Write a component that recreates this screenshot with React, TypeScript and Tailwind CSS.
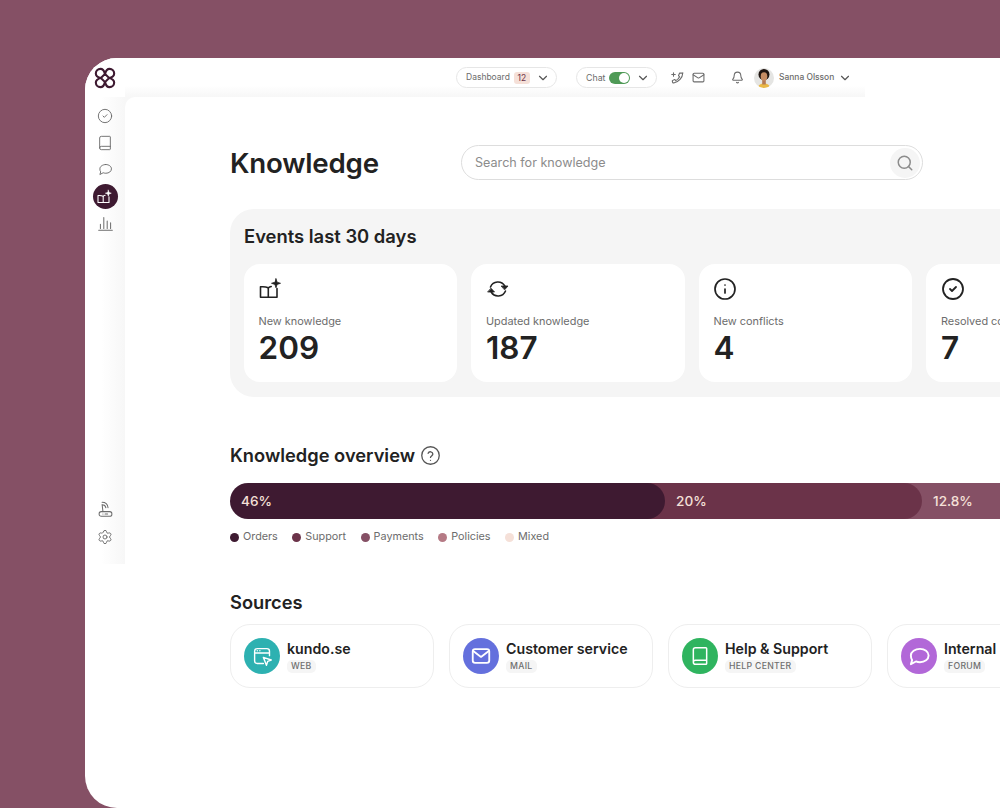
import { Bell, Book, ChevronDown, CircleCheck, Info, Mail, Search, Settings } from 'lucide-react'
import type { ReactNode } from 'react'

const events = [
  { label: 'New knowledge', value: '209', icon: <BookSpark className="w-[24px] h-[24px]" /> },
  { label: 'Updated knowledge', value: '187', icon: <SyncIcon /> },
  { label: 'New conflicts', value: '4', icon: <Info className="w-[24px] h-[24px]" strokeWidth={1.7} /> },
  { label: 'Resolved conflicts', value: '7', icon: <CircleCheck className="w-[24px] h-[24px]" strokeWidth={1.8} /> },
]

const legend = [
  { label: 'Orders', color: 'bg-[#3e1a31]' },
  { label: 'Support', color: 'bg-[#6b3349]' },
  { label: 'Payments', color: 'bg-[#855065]' },
  { label: 'Policies', color: 'bg-[#b57a85]' },
  { label: 'Mixed', color: 'bg-[#f5e0d8]' },
]

function Logo() {
  return (
    <svg viewBox="0 0 24 24" className="w-[22px] h-[22px]" fill="none" stroke="#3e1a31" strokeWidth="2.300" strokeLinejoin="round">
      <path d="M12 7.500C11 3.500 9.500 2 7 2 4.200 2 2 4.200 2 7c0 2.500 1.500 4 5.500 5" />
      <path d="M12 7.500C13 3.500 14.500 2 17 2c2.800 0 5 2.200 5 5 0 2.500-1.500 4-5.500 5" />
      <path d="M12 16.500C11 20.500 9.500 22 7 22c-2.800 0-5-2.200-5-5 0-2.500 1.500-4 5.500-5" />
      <path d="M12 16.500c1 4 2.500 5.500 5 5.500 2.800 0 5-2.200 5-5 0-2.500-1.500-4-5.500-5" />
      <path d="M12 7.500L16.500 12 12 16.500 7.500 12Z" />
    </svg>
  )
}

function BookSpark({ className }: { className: string }) {
  return (
    <svg viewBox="0 0 24 24" className={className} fill="none" stroke="currentColor" strokeWidth="1.600" strokeLinejoin="round" strokeLinecap="round">
      <path d="M9.300 20.200V10.800C7.300 9.900 4.300 9.500 1.500 9.800V20.200H18V11.500" />
      <path d="M9.300 10.800c.9-.6 1.800-1 2.900-1.300" />
      <path d="M17 1.800l1.100 3.400 3.400 1.100-3.400 1.100-1.100 3.400-1.100-3.400-3.400-1.100 3.400-1.100Z" fill="currentColor" strokeWidth="0.800" />
    </svg>
  )
}

function SyncIcon() {
  return (
    <svg viewBox="0 0 24 24" className="w-[24px] h-[24px]" fill="none" stroke="currentColor" strokeWidth="1.600" strokeLinecap="round" strokeLinejoin="round">
      <path d="M4.500 10A8 8 0 0 1 18.800 9" />
      <path d="M19.500 14A8 8 0 0 1 5.200 15" />
      <path d="M15.500 9h6.500l-3.200 3.600Z" fill="currentColor" strokeWidth="0.800" />
      <path d="M2 15h6.500l-3.300-3.600Z" fill="currentColor" strokeWidth="0.800" />
    </svg>
  )
}

function BarsIcon() {
  return (
    <svg viewBox="0 0 20 20" className="w-[17px] h-[17px]" fill="none" stroke="currentColor" strokeWidth="1.200" strokeLinecap="round">
      <path d="M2 18h16M4 16v-5M8 16V3M12 16V7M16 16v-7" />
    </svg>
  )
}

function RouterIcon() {
  return (
    <svg viewBox="0 0 20 20" className="w-[17px] h-[17px]" fill="none" stroke="currentColor" strokeWidth="1.200" strokeLinecap="round" strokeLinejoin="round">
      <rect x="2.500" y="12.500" width="15" height="5.500" rx="2.500" />
      <path d="M7 12.500L6 4M6 1.500c3.500 0 6.500 2.500 7 6.500M6.500 4.500c2 0 3.500 1.500 4 3.500" />
      <path d="M7 15.300h.01M9.500 15.300h3" />
    </svg>
  )
}

function Bubble({ className, strokeWidth }: { className: string; strokeWidth: number }) {
  return (
    <svg viewBox="0 0 24 24" className={className} fill="none" stroke="currentColor" strokeWidth={strokeWidth} strokeLinecap="round" strokeLinejoin="round">
      <path d="M12.500 4c5 0 9 3 9 7s-4 7-9 7c-1.500 0-3-.3-4.200-.8L3 20l1.300-4.200C3.400 14.500 3 13 3 11c0-4 4.500-7 9.500-7Z" />
    </svg>
  )
}

function PhonePlus() {
  return (
    <svg viewBox="0 0 24 24" className="w-[14px] h-[14px]" fill="none" stroke="currentColor" strokeWidth="1.900" strokeLinecap="round" strokeLinejoin="round">
      <path d="M21 4c-.5 9-7 16-15.500 17.500-1.500 0-2.500-2.500-2.500-4l4-2 2 2c3-1.500 5-3.500 6.500-6.500l-2-2 2-4.500c1.500 0 3 .5 5.500 0Z" transform="translate(1 -1)" />
      <path d="M6 3v6M3 6h6" />
    </svg>
  )
}

function Avatar() {
  return (
    <svg viewBox="0 0 20 20" className="w-[20px] h-[20px] rounded-full">
      <rect width="20" height="20" fill="#e5e5e3" />
      <path d="M4 20c.5-3.500 3-4.500 6-4.500s5.500 1 6 4.500Z" fill="#eab845" />
      <rect x="8.200" y="11" width="3.600" height="5.500" fill="#b47a55" />
      <circle cx="10" cy="6.500" r="5.500" fill="#1f1511" />
      <ellipse cx="10" cy="8.500" rx="3.300" ry="4.200" fill="#c58c63" />
    </svg>
  )
}

function SourceCard({ name, kind, color, icon }: { name: string; kind: string; color: string; icon: ReactNode }) {
  return (
    <div className="w-[204px] h-[64px] shrink-0 rounded-[20px] border border-[#eeeeee] flex items-center pl-[13px] gap-[7px]">
      <div className={`w-[36px] h-[36px] rounded-full flex items-center justify-center text-white shrink-0 ${color}`}>{icon}</div>
      <div className="whitespace-nowrap">
        <div className="text-[14.200px] leading-[18px] font-semibold text-[#222222]">{name}</div>
        <span className="block w-fit mt-[2px] px-[4px] bg-[#f5f5f5] rounded-[5px] text-[8.700px] leading-[13px] tracking-[0.3px] font-medium text-[#6f6f6f]">{kind}</span>
      </div>
    </div>
  )
}

function NavIcon({ children, active }: { children: ReactNode; active?: boolean }) {
  return (
    <div className={`w-[25px] h-[25px] rounded-full flex items-center justify-center ${active ? 'bg-[#3e1a31] text-white' : 'text-[#6c6c6c]'}`}>
      {children}
    </div>
  )
}

export default function App() {
  return (
    <div className="h-[808px] w-[1000px] overflow-hidden bg-[#855065] pl-[85px] pt-[58px]" style={{ fontFamily: 'Inter, sans-serif' }}>
      <div className="h-[750px] w-[915px] bg-white rounded-l-[32px] overflow-hidden">
        {/* top bar */}
        <div className="flex w-[780px] h-[39px]">
          <div className="w-[40px] flex items-center justify-center bg-white">
            <Logo />
          </div>
          <div className="flex-1 flex items-center pl-[331px] text-[#6c6c6c] bg-gradient-to-b from-white from-70% to-[#f7f7f7]">
            <div className="w-[101px] h-[21px] rounded-full border border-[#e6e6e6] bg-white flex items-center pl-[9px] text-[8.500px]">
              Dashboard
              <span className="ml-[4px] w-[16px] h-[12px] rounded-[3px] bg-[#f5e0d8] text-[#6b3349] text-[8.500px] leading-[12px] text-center">12</span>
              <ChevronDown className="ml-[6px] w-[14px] h-[14px] text-[#555555]" />
            </div>
            <div className="ml-[19px] w-[81px] h-[21px] rounded-full border border-[#e6e6e6] bg-white flex items-center pl-[9px] text-[8.800px]">
              Chat
              <span className="ml-[4px] w-[21px] h-[12px] rounded-full bg-[#4f9a56] flex items-center justify-end pr-[1px]">
                <span className="w-[10px] h-[10px] rounded-full bg-white" />
              </span>
              <ChevronDown className="ml-[6px] w-[14px] h-[14px] text-[#555555]" />
            </div>
            <div className="ml-[12.500px]"><PhonePlus /></div>
            <Mail className="ml-[8px] w-[13px] h-[13px]" />
            <Bell className="ml-[26px] w-[13px] h-[13px]" />
            <div className="ml-[10.500px]"><Avatar /></div>
            <span className="ml-[5px] text-[8.450px] font-medium">Sanna Olsson</span>
            <ChevronDown className="ml-[4px] w-[14px] h-[14px] text-[#555555]" />
          </div>
        </div>

        <div className="flex bg-[linear-gradient(#f7f7f7,#f7f7f7)] bg-no-repeat bg-[length:20px_20px] bg-[position:40px_0]">
          {/* side rail */}
          <div className="w-[40px] h-[467px] shrink-0 flex flex-col items-center justify-between pb-[15px] pt-[6px] bg-gradient-to-r from-white from-40% to-[#f7f7f7]">
            <div className="flex flex-col items-center gap-[2px]">
              <NavIcon><CircleCheck className="w-[16px] h-[16px]" strokeWidth={1.400} /></NavIcon>
              <NavIcon><Book className="w-[16px] h-[16px]" strokeWidth={1.400} /></NavIcon>
              <NavIcon><Bubble className="w-[15px] h-[15px]" strokeWidth={1.500} /></NavIcon>
              <NavIcon active><BookSpark className="w-[16px] h-[16px]" /></NavIcon>
              <NavIcon><BarsIcon /></NavIcon>
            </div>
            <div className="flex flex-col items-center gap-[2px]">
              <NavIcon><RouterIcon /></NavIcon>
              <NavIcon><Settings className="w-[16px] h-[16px]" strokeWidth={1.400} /></NavIcon>
            </div>
          </div>

          {/* main */}
          <div className="flex-1 min-w-0 rounded-tl-[10px] bg-white pl-[105px] pt-[48px] text-[#222222]">
            <div className="flex items-center w-[693px]">
              <h1 className="w-[231px] h-[35px] text-[27.700px] leading-[37px] font-semibold tracking-[-0.2px]">Knowledge</h1>
              <div className="w-[462px] h-[35px] rounded-full border border-[#dddddd] flex items-center pl-[13px] pr-[2px] justify-between">
                <span className="mt-[1px] text-[12.600px] text-[#8c8c8c]">Search for knowledge</span>
                <span className="w-[30px] h-[30px] rounded-full bg-[#f5f5f5] flex items-center justify-center">
                  <Search className="w-[18px] h-[18px] text-[#8c8c8c]" />
                </span>
              </div>
            </div>

            <div className="mt-[29px] w-[800px] h-[188px] rounded-l-[24px] bg-[#f5f5f5] pl-[14px] pt-[15px]">
              <h2 className="text-[18.400px] leading-[24px] font-semibold">Events last 30 days</h2>
              <div className="mt-[16px] flex gap-[14.200px]">
                {events.map(e => (
                  <div key={e.label} className="w-[213.300px] h-[118px] shrink-0 rounded-[16px] bg-white pl-[14.500px] pt-[13px]">
                    {e.icon}
                    <div className="mt-[12px] text-[10.900px] leading-[16px] text-[#6c6c6c] whitespace-nowrap">{e.label}</div>
                    <div className="mt-[1px] text-[31.500px] leading-[36px] font-semibold">{e.value}</div>
                  </div>
                ))}
              </div>
            </div>

            <div className="mt-[46px] flex items-center gap-[4.500px]">
              <h2 className="text-[18.300px] leading-[24px] font-semibold">Knowledge overview</h2>
              <svg viewBox="0 0 24 24" className="w-[21px] h-[21px] text-[#555555]" fill="none" stroke="currentColor" strokeWidth="1.500" strokeLinecap="round">
                <circle cx="12" cy="12" r="10" />
                <path d="M9.300 9.500a2.800 2.800 0 0 1 5.400.9c0 1.800-2.700 2.300-2.700 3.800M12 17.500h.01" />
              </svg>
            </div>

            <div className="mt-[16px] flex h-[36px] w-[800px] text-[#f5e0d8] text-[13.600px] font-medium">
              <div className="relative z-20 w-[435px] rounded-full bg-[#3e1a31] pl-[11px] flex items-center">46%</div>
              <div className="relative z-10 w-[275px] -ml-[18px] rounded-r-full bg-[#6b3349] pl-[29px] flex items-center">20%</div>
              <div className="w-[120px] -ml-[18px] bg-[#855065] pl-[29px] flex items-center">12.8%</div>
            </div>

            <div className="mt-[11px] flex gap-[14.500px] text-[10.800px] leading-[14px] text-[#6c6c6c]">
              {legend.map(l => (
                <div key={l.label} className="flex items-center gap-[4px]">
                  <span className={`w-[9px] h-[9px] rounded-full ${l.color}`} />
                  {l.label}
                </div>
              ))}
            </div>

            <h2 className="mt-[46px] text-[18.300px] leading-[24px] font-semibold">Sources</h2>

            <div className="mt-[10px] flex gap-[15px]">
              <SourceCard name="kundo.se" kind="WEB" color="bg-[#2db1b1]" icon={
                <svg viewBox="0 0 24 24" className="w-[21px] h-[21px]" fill="none" stroke="currentColor" strokeWidth="1.600" strokeLinecap="round" strokeLinejoin="round">
                  <path d="M13 20H6a3 3 0 0 1-3-3V6a3 3 0 0 1 3-3h11a3 3 0 0 1 3 3v5M3 8h17M6 5.500h.01M9 5.500h.01" />
                  <path d="M13 13l9 3-4 1.500-1.500 4.500Z" />
                </svg>
              } />
              <SourceCard name="Customer service" kind="MAIL" color="bg-[#6470dd]" icon={
                <svg viewBox="0 0 24 24" className="w-[22px] h-[22px]" fill="none" stroke="currentColor" strokeWidth="2" strokeLinecap="round" strokeLinejoin="round">
                  <rect x="3" y="4.500" width="18" height="15" rx="2.500" />
                  <path d="M3.500 6.500L12 13l8.500-6.500" />
                </svg>
              } />
              <SourceCard name="Help & Support" kind="HELP CENTER" color="bg-[#2fb45f]" icon={<Book className="w-[20px] h-[20px]" strokeWidth={1.800} />} />
              <SourceCard name="Internal" kind="FORUM" color="bg-[#b268d8]" icon={<Bubble className="w-[23px] h-[23px]" strokeWidth={2} />} />
            </div>
          </div>
        </div>
      </div>
    </div>
  )
}
